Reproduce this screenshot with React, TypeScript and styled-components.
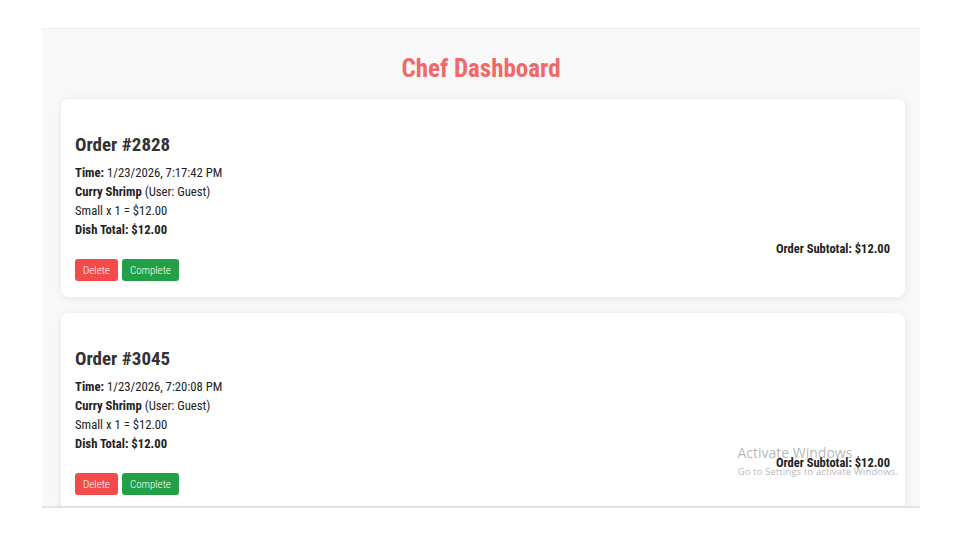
import React from "react";
import styled, { createGlobalStyle } from "styled-components";

const GlobalStyle = createGlobalStyle`
  html, body {
    margin: 0;
    padding: 0;
    background: #ffffff;
  }
  body {
    font-family: "Roboto Condensed", Roboto, "Liberation Sans", sans-serif;
    color: #333;
  }
`;

const Frame = styled.div`
  position: relative;
  margin: 28px 0 0 42px;
  width: 878px;
  height: 480px;
  box-sizing: border-box;
  background: #f8f8f8;
  border-top: 1px solid #efefef;
  border-bottom: 2px solid #dbe3ef;
  overflow: hidden;
`;

const Title = styled.h1`
  margin: 0;
  padding: 26px 0 0;
  height: 70px;
  box-sizing: border-box;
  text-align: center;
  font-size: 25px;
  line-height: 28px;
  font-weight: 700;
  color: #f26868;
`;

const OrderList = styled.div`
  display: flex;
  flex-direction: column;
  gap: 16px;
  padding: 0 15px 0 19px;
`;

const Card = styled.div`
  background: #fff;
  border-radius: 8px;
  box-shadow: 0 1px 8px rgba(0, 0, 0, 0.08);
  padding: 16px 15px 16px 14px;
`;

const OrderTitle = styled.h2`
  margin: 18px 0 6px;
  font-size: 19px;
  line-height: 24px;
  font-weight: 700;
  color: #333;
`;

const Line = styled.div`
  font-size: 12.7px;
  line-height: 19px;
  color: #222;
`;

const Strong = styled.b`
  font-weight: 700;
`;

const Subtotal = styled.div`
  text-align: right;
  font-size: 12.5px;
  line-height: 20px;
  font-weight: 700;
  color: #222;
`;

const Actions = styled.div`
  display: flex;
  gap: 4px;
`;

const Button = styled.button<{ $variant: "delete" | "complete" }>`
  height: 22px;
  padding: 0 8px;
  border: none;
  border-radius: 3px;
  font-family: "Roboto Condensed", Roboto, sans-serif;
  font-size: 11px;
  font-weight: 300;
  color: #fff;
  background: ${(p) => (p.$variant === "delete" ? "#f44a4a" : "#23a047")};
  cursor: pointer;
`;

const Watermark = styled.div`
  position: absolute;
  right: 22px;
  bottom: 27px;
  font-family: "Segoe UI", "Open Sans", sans-serif;
  color: rgba(120, 120, 120, 0.55);
  pointer-events: none;
`;

const WatermarkTitle = styled.div`
  font-size: 14px;
  line-height: 18px;
  margin-bottom: 3px;
`;

const WatermarkText = styled.div`
  font-size: 9.8px;
  line-height: 14px;
`;

type Order = {
  id: number;
  time: string;
  dish: string;
  user: string;
  size: string;
  qty: number;
  price: string;
};

const orders: Order[] = [
  { id: 2828, time: "1/23/2026, 7:17:42 PM", dish: "Curry Shrimp", user: "Guest", size: "Small", qty: 1, price: "$12.00" },
  { id: 3045, time: "1/23/2026, 7:20:08 PM", dish: "Curry Shrimp", user: "Guest", size: "Small", qty: 1, price: "$12.00" },
];

const OrderCard = ({ order }: { order: Order }) => (
  <Card>
    <OrderTitle>Order #{order.id}</OrderTitle>
    <Line>
      <Strong>Time:</Strong> {order.time}
    </Line>
    <Line>
      <Strong>{order.dish}</Strong> (User: {order.user})
    </Line>
    <Line>
      {order.size} x {order.qty} = {order.price}
    </Line>
    <Line>
      <Strong>Dish Total: {order.price}</Strong>
    </Line>
    <Subtotal>Order Subtotal: {order.price}</Subtotal>
    <Actions>
      <Button $variant="delete">Delete</Button>
      <Button $variant="complete">Complete</Button>
    </Actions>
  </Card>
);

export default function App() {
  return (
    <>
      <GlobalStyle />
      <Frame>
        <Title>Chef Dashboard</Title>
        <OrderList>
          {orders.map((o) => (
            <OrderCard key={o.id} order={o} />
          ))}
        </OrderList>
        <Watermark>
          <WatermarkTitle>Activate Windows</WatermarkTitle>
          <WatermarkText>Go to Settings to activate Windows.</WatermarkText>
        </Watermark>
      </Frame>
    </>
  );
}
